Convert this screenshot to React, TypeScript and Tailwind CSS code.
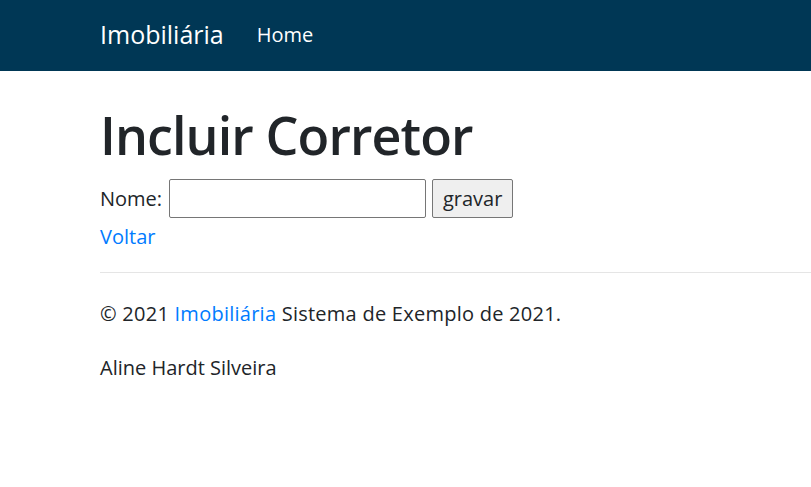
import React from 'react';

export default function App() {
  return (
    <div className="min-h-screen bg-white text-[#212529]" style={{ fontFamily: '"Open Sans", "Noto Sans", sans-serif' }}>
      <nav className="h-[71px] bg-[#003755] flex items-center pl-[100px]">
        <span className="text-[25px] text-white mr-[33px] -mt-[2px]">Imobiliária</span>
        <span className="text-[20px] text-white -mt-[2px]">Home</span>
      </nav>

      <main className="pl-[100px]">
        <h1 className="text-[52px] leading-[1.2] font-semibold mt-[33px] tracking-[-0.9px]">Incluir Corretor</h1>
        <form className="flex items-center text-[20px] mt-[13px]">
          <label>Nome:</label>
          <input type="text" className="ml-[7px] w-[257px] h-[39px] border border-[#767676] rounded-[2px] bg-white" />
          <button type="button" className="ml-[6px] w-[81px] h-[39px] border border-[#767676] rounded-[2px] bg-[#efefef] text-[20px]">
            gravar
          </button>
        </form>
        <a href="#" className="block text-[20px] text-[#007bff] mt-[4px]">Voltar</a>
      </main>

      <hr className="ml-[100px] mt-[20px] border-t border-[#e5e5e5]" />

      <footer className="pl-[100px] text-[20px]">
        <p className="mt-[26px] tracking-[0.25px]">
          © 2021 <a href="#" className="text-[#007bff]">Imobiliária</a> Sistema de Exemplo de 2021.
        </p>
        <p className="mt-[24px]">Aline Hardt Silveira</p>
      </footer>
    </div>
  );
}
